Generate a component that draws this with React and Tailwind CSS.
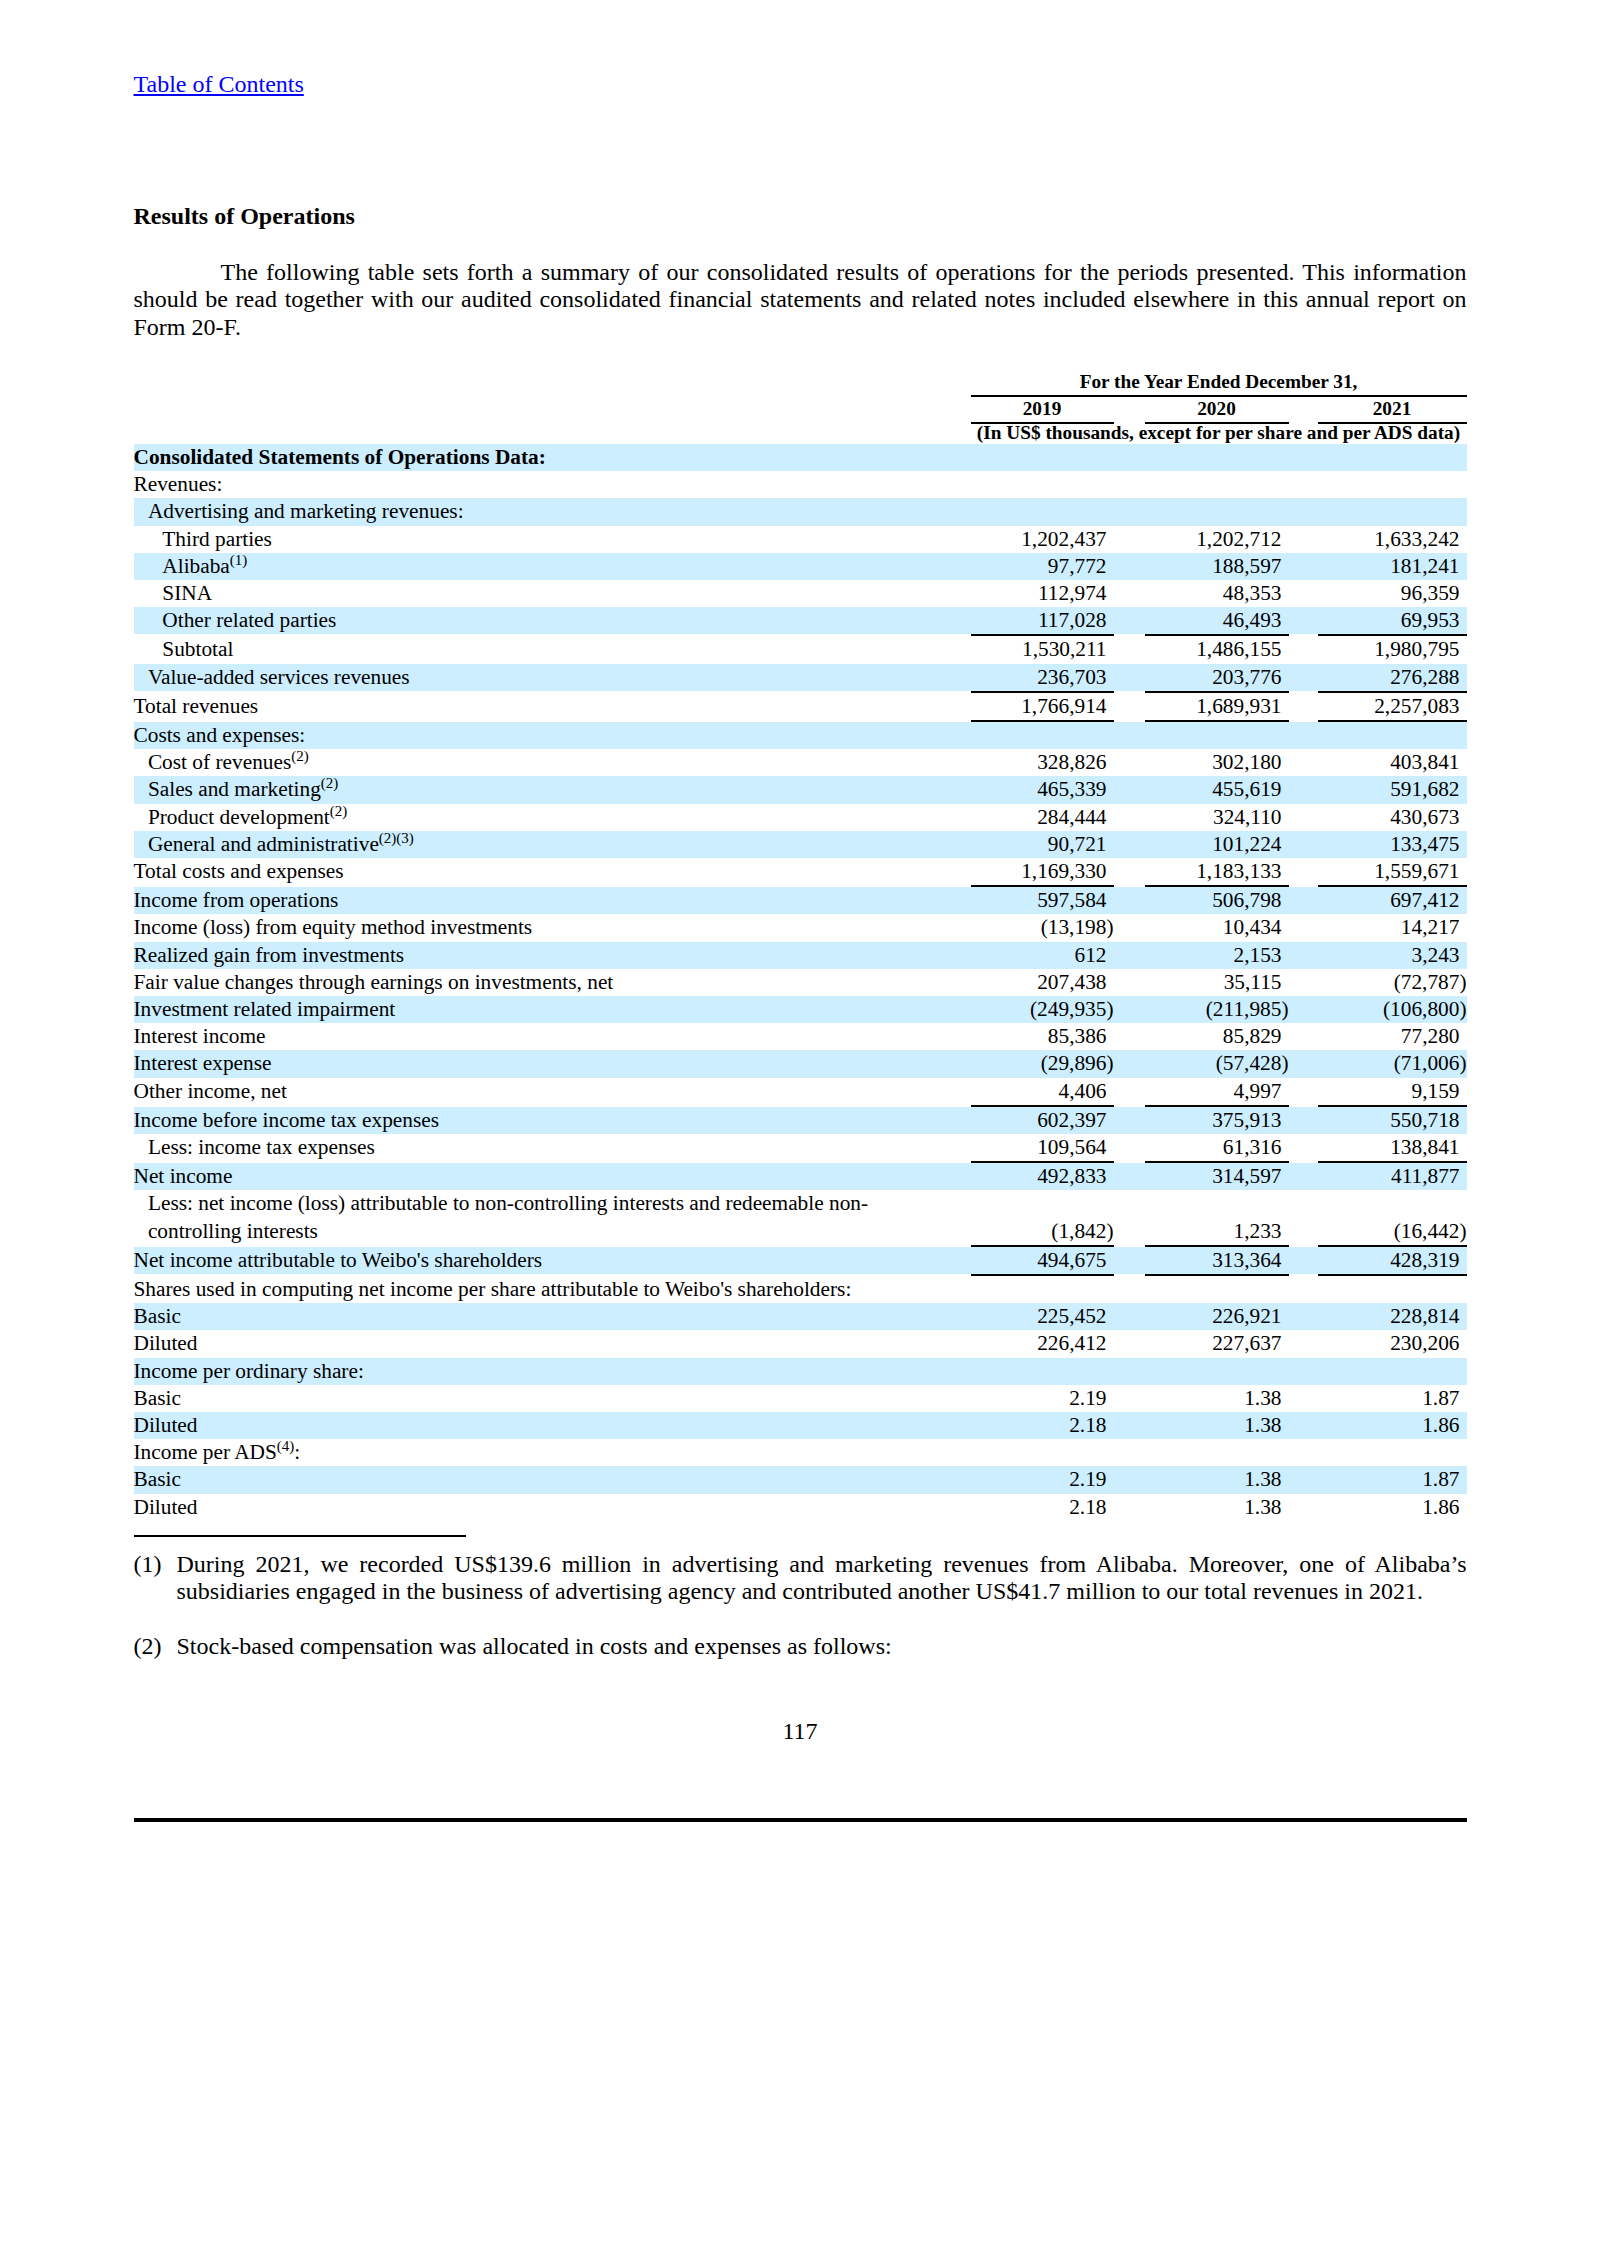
import React from "react";

const rows = [
  { label: "Consolidated Statements of Operations Data:", bold: true },
  { label: "Revenues:" },
  { label: "Advertising and marketing revenues:", indent: 1 },
  { label: "Third parties", indent: 2, v: ["1,202,437", "1,202,712", "1,633,242"] },
  { label: "Alibaba", sup: "(1)", indent: 2, v: ["97,772", "188,597", "181,241"] },
  { label: "SINA", indent: 2, v: ["112,974", "48,353", "96,359"] },
  { label: "Other related parties", indent: 2, v: ["117,028", "46,493", "69,953"], rule: true },
  { label: "Subtotal", indent: 2, v: ["1,530,211", "1,486,155", "1,980,795"] },
  { label: "Value-added services revenues", indent: 1, v: ["236,703", "203,776", "276,288"], rule: true },
  { label: "Total revenues", v: ["1,766,914", "1,689,931", "2,257,083"], rule: true },
  { label: "Costs and expenses:" },
  { label: "Cost of revenues", sup: "(2)", indent: 1, v: ["328,826", "302,180", "403,841"] },
  { label: "Sales and marketing", sup: "(2)", indent: 1, v: ["465,339", "455,619", "591,682"] },
  { label: "Product development", sup: "(2)", indent: 1, v: ["284,444", "324,110", "430,673"] },
  { label: "General and administrative", sup: "(2)(3)", indent: 1, v: ["90,721", "101,224", "133,475"] },
  { label: "Total costs and expenses", v: ["1,169,330", "1,183,133", "1,559,671"], rule: true },
  { label: "Income from operations", v: ["597,584", "506,798", "697,412"] },
  { label: "Income (loss) from equity method investments", v: ["(13,198)", "10,434", "14,217"] },
  { label: "Realized gain from investments", v: ["612", "2,153", "3,243"] },
  { label: "Fair value changes through earnings on investments, net", v: ["207,438", "35,115", "(72,787)"] },
  { label: "Investment related impairment", v: ["(249,935)", "(211,985)", "(106,800)"] },
  { label: "Interest income", v: ["85,386", "85,829", "77,280"] },
  { label: "Interest expense", v: ["(29,896)", "(57,428)", "(71,006)"] },
  { label: "Other income, net", v: ["4,406", "4,997", "9,159"], rule: true },
  { label: "Income before income tax expenses", v: ["602,397", "375,913", "550,718"] },
  { label: "Less: income tax expenses", indent: 1, v: ["109,564", "61,316", "138,841"], rule: true },
  { label: "Net income", v: ["492,833", "314,597", "411,877"] },
  {
    label: "Less: net income (loss) attributable to non-controlling interests and redeemable non-",
    second: "controlling interests",
    indent: 1,
    v: ["(1,842)", "1,233", "(16,442)"],
    rule: true,
  },
  { label: "Net income attributable to Weibo's shareholders", v: ["494,675", "313,364", "428,319"], rule: true },
  { label: "Shares used in computing net income per share attributable to Weibo's shareholders:" },
  { label: "Basic", v: ["225,452", "226,921", "228,814"] },
  { label: "Diluted", v: ["226,412", "227,637", "230,206"] },
  { label: "Income per ordinary share:" },
  { label: "Basic", v: ["2.19", "1.38", "1.87"] },
  { label: "Diluted", v: ["2.18", "1.38", "1.86"] },
  { label: "Income per ADS", sup: "(4)", suffix: ":" },
  { label: "Basic", v: ["2.19", "1.38", "1.87"] },
  { label: "Diluted", v: ["2.18", "1.38", "1.86"] },
];

function Num({ v }) {
  if (!v) return <div />;
  const neg = v.startsWith("(");
  return (
    <div className="text-right pr-[7px] whitespace-nowrap">
      {neg ? (
        <>
          {v.slice(0, -1)}
          <span className="-mr-[7px]">)</span>
        </>
      ) : (
        v
      )}
    </div>
  );
}

function Rule() {
  return (
    <div className="grid grid-cols-[837px_143px_31px_144px_29px_149px] h-[2px]">
      <div />
      <div className="bg-black" />
      <div />
      <div className="bg-black" />
      <div />
      <div className="bg-black" />
    </div>
  );
}

function Row({ r, striped }) {
  const pad = r.indent === 2 ? "pl-[28.8px]" : r.indent === 1 ? "pl-[14.4px]" : "";
  const v = r.v || [];
  return (
    <div
      className={`grid grid-cols-[837px_143px_31px_144px_29px_149px] items-end leading-[27.2px] ${
        striped ? "bg-[#cceeff]" : ""
      }`}
    >
      <div className={`${pad} ${r.bold ? "font-bold" : ""}`}>
        {r.label}
        {r.sup && <sup className="text-[15px] top-[-8px]">{r.sup}</sup>}
        {r.suffix}
        {r.second && (
          <>
            <br />
            {r.second}
          </>
        )}
      </div>
      <Num v={v[0]} />
      <div />
      <Num v={v[1]} />
      <div />
      <Num v={v[2]} />
    </div>
  );
}

export default function App() {
  return (
    <div className="min-h-[2265px] bg-white text-black font-['Liberation_Serif','Times_New_Roman',serif]">
      <div className="mx-auto w-[1333px] pt-[71px]">
        <a href="#toc" className="text-[24px] leading-[27.5px] text-[#0000ff] underline">
          Table of Contents
        </a>

        <h2 className="mt-[103.5px] text-[24px] leading-[27.5px] font-bold">Results of Operations</h2>

        <p className="mt-[28.5px] text-[24px] leading-[27.5px] text-justify indent-[87px]">
          The following table sets forth a summary of our consolidated results of operations for the periods
          presented. This information should be read together with our audited consolidated financial statements
          and related notes included elsewhere in this annual report on Form 20-F.
        </p>

        <div className="mt-[32.5px]">
          <div className="grid grid-cols-[837px_143px_31px_144px_29px_149px] font-bold text-[19.3px]">
            <div className="col-start-2 col-span-5 text-center leading-[15.4px] pb-[6px] border-b-2 border-black">
              For the Year Ended December 31,
            </div>
            <div className="col-start-2 text-center leading-[24.7px] border-b-2 border-black">2019</div>
            <div className="col-start-4 text-center leading-[24.7px] border-b-2 border-black">2020</div>
            <div className="col-start-6 text-center leading-[24.7px] border-b-2 border-black">2021</div>
            <div className="col-start-2 col-span-5 text-center leading-[17.5px] pb-[2.8px] whitespace-nowrap">
              (In US$ thousands, except for per share and per ADS data)
            </div>
          </div>

          <div className="text-[21.33px]">
            {rows.map((r, i) => (
              <React.Fragment key={i}>
                <Row r={r} striped={i % 2 === 0} />
                {r.rule && <Rule />}
              </React.Fragment>
            ))}
          </div>
        </div>

        <div className="mt-[14px] h-[2px] w-[332px] bg-black" />

        <div className="mt-[14px] flex text-[24px] leading-[26.7px]">
          <div className="w-[43px] shrink-0">(1)</div>
          <p className="flex-1 text-justify">
            During 2021, we recorded US$139.6 million in advertising and marketing revenues from Alibaba. Moreover,
            one of Alibaba’s subsidiaries engaged in the business of advertising agency and contributed another
            US$41.7 million to our total revenues in 2021.
          </p>
        </div>

        <div className="mt-[29px] flex text-[24px] leading-[26.7px]">
          <div className="w-[43px] shrink-0">(2)</div>
          <p className="flex-1 text-justify">Stock-based compensation was allocated in costs and expenses as follows:</p>
        </div>

        <div className="mt-[58.3px] text-center text-[24px] leading-[26.7px]">117</div>

        <div className="mt-[73px] h-[4px] bg-black" />
      </div>
    </div>
  );
}
